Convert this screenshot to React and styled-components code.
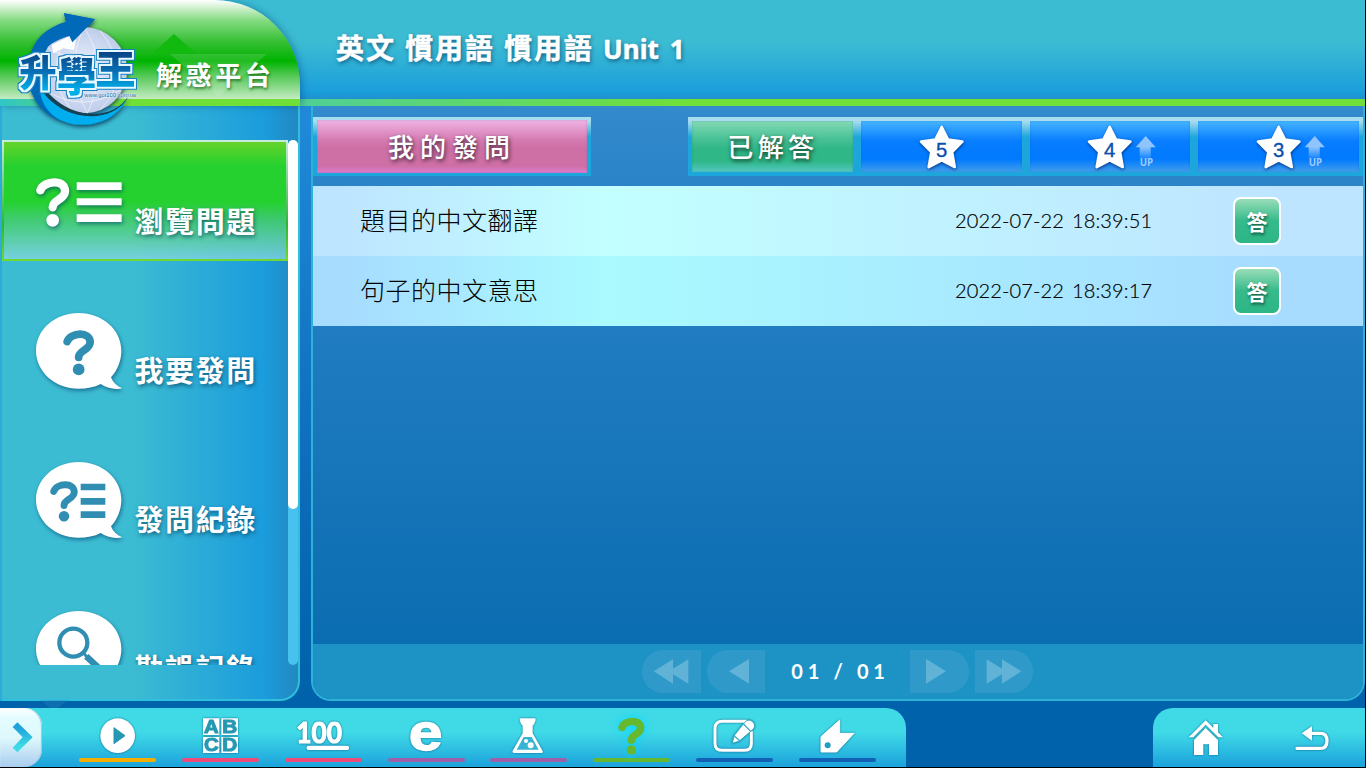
import React from "react";
import styled, { createGlobalStyle } from "styled-components";

const Global = createGlobalStyle`
  * { box-sizing: border-box; }
  body { margin: 0; background: #000; overflow: hidden;
    font-family: "Noto Sans CJK TC", "Noto Sans", sans-serif; }
  svg { display: block; flex: none; }
`;

const Screen = styled.div`
  width: 1366px; height: 768px; padding: 0 1px 1px 0; background: #000;
`;
const Page = styled.div`
  height: 767px; display: flex; flex-direction: column; position: relative;
  background: linear-gradient(180deg, #218ada 100px, #0b6cba 480px, #0062aa 700px);
`;
const Header = styled.header`
  height: 106px; flex: none; display: flex;
  background: linear-gradient(180deg, #3cbcd2 0, #3cbcd2 42px, #1b9edc 92px, #2090cf 99px, transparent 99px),
    linear-gradient(90deg, #4fcf97 300px, #70e038 690px);
`;
const Badge = styled.div`
  width: 300px; height: 106px; position: relative; z-index: 2;
  border-radius: 0 85px 0 0;
  background: linear-gradient(180deg, #fff 0, #86dc83 20px, #35bf34 42px, #00b300 61px, #55c957 76px, #c4ebc2 99px, transparent 99px),
    linear-gradient(90deg, #2fc6c7 0, #70e038 120px);
  box-shadow: 2px 0 7px rgba(0, 60, 120, 0.4);
`;
const BadgeArt = styled.svg`
  position: absolute; left: 0; top: 0; overflow: visible;
`;
const BadgeName = styled.div`
  padding: 55px 0 0 156px; font-size: 26px; line-height: 38px; font-weight: 700;
  letter-spacing: 3.6px; color: #fff; white-space: nowrap; position: relative;
  text-shadow: 1px 2px 3px rgba(0, 60, 0, 0.6);
`;
const Title = styled.h1`
  margin: 0; padding: 27px 0 0 36px; font-size: 28px; line-height: 40px; font-weight: 700;
  letter-spacing: 1.9px; word-spacing: 1px; color: #fff; white-space: nowrap;
  -webkit-text-stroke: 0.5px #fff;
  text-shadow: 1px 2px 4px rgba(0, 50, 90, 0.7);
`;
const Latin = styled.span`
  font-family: "Noto Sans", sans-serif; font-size: 26px; letter-spacing: 0.1px; word-spacing: 4px;
`;
const Body = styled.div`
  height: 595px; flex: none; display: flex; gap: 11px;
`;
const Sidebar = styled.aside`
  width: 300px; border: 2px solid #2fbfdc; border-top: 0; border-left-color: #2cadd8;
  border-radius: 0 0 20px 0; padding-top: 34px; display: flex; align-items: flex-start;
  background: linear-gradient(90deg, #3cbcd2 130px, #1b9cdc 262px, #2289c2 294px);
`;
const Menu = styled.nav`
  width: 286px; height: 525px; overflow: hidden; display: flex; flex-direction: column; gap: 28px;
`;
const MenuItem = styled.div`
  height: 121px; flex: none; display: flex; padding-left: 32px; position: relative;
  &::before { content: ""; position: absolute; inset: 0; border: 2px solid;
    border-image: linear-gradient(#c7ebdd, #2db43a 70%, #70d82e) 1;
    background: linear-gradient(180deg, #66d32c 0, #25d12f 24px, #25d12f 60px, rgba(66,205,105,.9) 78px, rgba(140,215,235,.75) 119px);
    display: ${(p) => (p.$active ? "block" : "none")}; }
`;
const MenuIcon = styled.svg`
  position: relative; filter: drop-shadow(1px 2px 2px rgba(0, 60, 110, 0.6));
`;
const MenuLabel = styled.span`
  position: relative; margin: 60px 0 0 9.5px; line-height: 40px; font-size: 29px; font-weight: 700;
  letter-spacing: 1.6px; color: #fff; white-space: nowrap;
  text-shadow: 1px 2px 4px rgba(0, 60, 90, 0.7);
`;
const Track = styled.div`
  width: 10px; height: 525px; border-radius: 5px; background: #48c1ef;
`;
const Thumb = styled.div`
  height: 369px; border-radius: 5px; background: #fff;
`;
const Main = styled.main`
  width: 1054px; border: 2px solid #2cb2d6; border-top: 0; border-radius: 0 0 20px 20px;
  display: flex; flex-direction: column; overflow: hidden;
  background: linear-gradient(180deg, #338bcd 0, #2b83c8 80px, #217cc1 220px, #0b6db1 538px);
`;
const Tabs = styled.div`
  display: flex; justify-content: space-between; padding-top: 11px; height: 80px; flex: none;
`;
const TabGroup = styled.div`
  display: flex; height: 59px; width: 675px;
`;
const tones = {
  pink: "linear-gradient(180deg, #efb4e2 0, #d57ab2 20px, #ce6fa6 28px, #ce6fa6 46px, #de7cce 53px)",
  green: "linear-gradient(180deg, #84d9b4 0, #48c196 18px, #2fb787 28px, #2fb787 40px, #53c8c3 51px)",
  blue: "linear-gradient(180deg, #45b4ff 0, #087dff 20px, #007aff 38px, #429eea 51px)",
};
const Tab = styled.div`
  width: ${(p) => p.$w}; height: 59px; padding: ${(p) => (p.$tone === "pink" ? "3px 4px" : "4px")};
  background: linear-gradient(180deg, #a9dcef 4px, #1ca6dc 20px);
`;
const TabFace = styled.div`
  height: 100%; display: flex; align-items: center; justify-content: center; color: #fff;
  font-size: 26px; font-weight: 500; letter-spacing: ${(p) => (p.$tone === "pink" ? 6 : 4.4)}px; white-space: nowrap;
  padding-left: ${(p) => (p.$tone === "pink" ? 0 : 1)}px; padding-bottom: 3px;
  text-shadow: 1px 2px 4px rgba(0, 0, 0, 0.7);
  background: ${(p) => tones[p.$tone]};
  box-shadow: inset 0 0 2px rgba(0, 80, 180, 0.3);
`;
const StarArt = styled.svg`
  margin: -2px -4px -4px ${(p) => (p.$shift ? -6 : -4)}px; overflow: visible; text-shadow: none; letter-spacing: 0;
`;
const Row = styled.div`
  height: 70px; flex: none; display: flex; align-items: center; color: #000; padding-bottom: 2px;
  background: ${(p) => p.$alt
    ? "linear-gradient(90deg, #a7dcff 3%, #aafaff 28%, #a7dcff 92%)"
    : "linear-gradient(90deg, #bee5ff 3%, #c2ffff 28%, #bee5ff 92%)"};
`;
const Question = styled.div`
  width: 595px; margin-left: 47px; padding-bottom: 2px; font-size: 25px; font-weight: 300; letter-spacing: 0.5px;
`;
const Stamp = styled.div`
  width: 278px; padding-bottom: 1px; font-family: Lato, sans-serif; font-size: 20px; font-weight: 300;
  letter-spacing: 0.13px; word-spacing: 2.5px; -webkit-text-stroke: 0.2px #000;
`;
const Answer = styled.button`
  width: 48px; height: 48px; padding: 0; border: 2px solid #fff; border-radius: 8px; color: #fff;
  font: 700 21px/40px "Noto Sans CJK TC", sans-serif; margin-top: 1px;
  background: linear-gradient(180deg, #98ddb8 0, #35ba8b 22px, #2db686 100%);
  text-shadow: 1px 2px 3px rgba(0, 50, 30, 0.7);
`;
const Pager = styled.div`
  margin-top: auto; height: 55px; flex: none; display: flex; align-items: center; justify-content: center;
  gap: 6px; background: #1c93c4; padding-right: 1px;
`;
const PageButton = styled.div`
  width: 58.5px; height: 43px; background: #2f9aca; display: flex; align-items: center; justify-content: center;
  border-radius: ${(p) => (p.$back ? "21px 0 0 21px" : "0 21px 21px 0")};
`;
const PageText = styled.div`
  width: 133px; text-align: center; color: #fff; font: 700 20px Lato, sans-serif;
  letter-spacing: 4.7px; padding: 0 0 1px 6px; white-space: nowrap;
`;
const Dock = styled.footer`
  margin-top: 7px; height: 59px; display: flex; justify-content: space-between;
`;
const DockPart = styled.div`
  display: flex; width: ${(p) => p.$w}px;
  border-radius: ${(p) => (p.$right ? "20px 0 0 0" : "0 20px 0 0")};
  background: linear-gradient(180deg, #40dae7 24px, #1da5dc 57px);
`;
const Opener = styled.div`
  width: 42px; height: 59px; margin-right: 24px; border-radius: 0 18px 18px 0;
  background: linear-gradient(180deg, #fff, #e2fcff 10px, #def8fc 30px, #a9cdef 59px);
  box-shadow: inset -1px 0 1px #9cc6dc, inset 0 1px 1px #fff;
`;
const DockItem = styled.div`
  width: ${(p) => (p.$color ? 102.86 : 106)}px; display: flex; flex-direction: column; align-items: center;
  &::after { content: ""; width: 77px; height: 4px; border-radius: 2px; background: ${(p) => p.$color || "transparent"}; }
`;
const DockIcon = styled.svg`
  overflow: visible;
  filter: ${(p) => (p.$glow
    ? "drop-shadow(0 0 5px #00d8ff)"
    : "drop-shadow(0 0.7px 1px rgba(0, 70, 110, 0.75))")};
`;
const Decor = styled.svg`
  position: absolute; left: 40px; top: 700px;
`;

const Logo = () => (
  <BadgeArt width="300" height="140" viewBox="0 0 900 420">
    <defs>
      <linearGradient id="ink" gradientUnits="userSpaceOnUse" x1="0" y1="145" x2="0" y2="285">
        <stop offset="0" stopColor="#083c7c" /><stop offset=".5" stopColor="#086fb4" /><stop offset=".9" stopColor="#00aeea" />
      </linearGradient>
      <radialGradient id="globe"><stop offset="0" stopColor="#eef3ff" /><stop offset="1" stopColor="#bfcdea" /></radialGradient>
      <filter id="soft" x="-20%" y="-20%" width="140%" height="140%">
        <feDropShadow dx="2" dy="6" stdDeviation="6" floodColor="#024" floodOpacity=".75" />
      </filter>
      <filter id="outline" x="-20%" y="-20%" width="140%" height="140%" colorInterpolationFilters="sRGB">
        <feMorphology in="SourceGraphic" operator="dilate" radius="1.2" result="body" />
        <feMorphology in="SourceAlpha" operator="dilate" radius="5" result="mid" />
        <feMorphology in="SourceAlpha" operator="dilate" radius="9" result="wide" />
        <feFlood floodColor="#e9f7ff" /><feComposite in2="mid" operator="in" result="white" />
        <feFlood floodColor="#1681c2" /><feComposite in2="wide" operator="in" result="blue" />
        <feMerge><feMergeNode in="blue" /><feMergeNode in="white" /><feMergeNode in="body" /></feMerge>
      </filter>
    </defs>
    <path d="M455 162L522 102L590 162Z" fill="#12b90f" />
    <path d="M510 162H800L655 290Z" fill="#fff" opacity=".13" />
    <g filter="url(#soft)">
      <path d="M192 40L285 58L217 127L210 108C150 120 112 175 117 235C124 300 165 340 215 368C140 362 84 300 84 220C84 135 132 85 198 66Z" fill="#0069b8" />
      <circle cx="252" cy="211" r="129" fill="url(#globe)" />
      <g fill="none" stroke="#fff" strokeWidth="2" opacity=".8">
        <path d="M126 190Q250 270 376 190M145 145Q250 205 360 145M142 274Q250 340 362 270M252 82Q190 210 262 340M252 82Q330 200 262 340M215 88Q120 220 220 336M300 92Q405 220 300 330" />
      </g>
      <path d="M155 135L210 108L217 127L228 118L222 150L190 145L160 160Z" fill="#fff" />
      <path d="M122 262C126 400 330 412 384 290C340 362 200 368 122 250Z" fill="#123f52" />
      <path d="M120 272C134 400 328 408 380 297C338 368 195 372 124 270Z" fill="#00aeef" />
      <path d="M192 40L285 58L217 127L208 108C168 120 140 136 122 165L88 182C98 115 142 83 198 66Z" fill="#0069b8" />
    </g>
    <g fontFamily="Noto Sans CJK TC" fontWeight="900" textAnchor="middle" fill="url(#ink)" filter="url(#outline)">
      <text x="114" y="260" fontSize="112">升</text>
      <text x="230" y="274" fontSize="119">學</text>
      <text x="346" y="251" fontSize="121">王</text>
    </g>
    <text x="253" y="290" fontFamily="Liberation Sans" fontSize="18" textLength="155" fill="#1b5f94" stroke="#e8f4ff" strokeWidth="2" paintOrder="stroke">www.got100.com.tw</text>
  </BadgeArt>
);

const Hook = ({ x, y, s = 1, color = "#fff", w = 25 }) => (
  <g transform={`translate(${x} ${y}) scale(${s})`}>
    <path d="M-37 -37C-27 -67 38 -72 37 -34C36 -8 0 -10 0 14" fill="none" stroke={color} strokeWidth={w} strokeLinecap="round" strokeLinejoin="round" />
    <circle cx="0" cy="53" r="19" fill={color} />
  </g>
);
const Bubble = () => (
  <path d="M235 71C306 71 363 121 363 184C363 216 350 244 332 264C338 280 350 291 366 297C340 302 318 295 301 284C282 294 260 298 235 298C164 298 107 247 107 184C107 121 164 71 235 71Z" fill="#fff" />
);
const hole = "#318eb3";
const menu = [
  ["瀏覽問題", <g key="a"><Hook x={157} y={187} /><path d="M229 126H364V149H229ZM229 174H364V195H229ZM229 222H364V245H229Z" fill="#fff" /></g>],
  ["我要發問", <g key="b"><Bubble /><Hook x={235} y={191} s={0.93} color={hole} /></g>],
  ["發問紀錄", <g key="c"><Bubble /><Hook x={191} y={190} s={0.83} color={hole} /><path d="M241 136H315V156H241ZM241 179H315V199H241ZM241 219H315V239H241Z" fill={hole} /></g>],
  ["勘誤記錄", <g key="d"><Bubble /><g fill="none" stroke={hole}><circle cx="219" cy="166" r="42" strokeWidth="13" /><path d="M250 198L262 211" strokeWidth="9" /><path d="M258 207L306 252" strokeWidth="19" /></g></g>],
];

const ink = "#2798b2";
const dock = [
  ["#f5ad00", <g key="1"><circle cx="155" cy="83" r="52" fill="#fff" /><path d="M144 59L177 83L144 107Z" fill={ink} stroke={ink} strokeWidth="3" /></g>],
  ["#ef4b78", <g key="2"><path d="M102 31H151V81H102ZM157 31H207V81H157ZM102 87H151V135H102ZM157 87H207V135H157Z" fill="#fff" />
    <g fill={ink} stroke={ink} strokeWidth="3" fontFamily="Liberation Sans" fontSize="56" fontWeight="700" textAnchor="middle">
      <text x="127" y="76" textLength="44" lengthAdjust="spacingAndGlyphs">A</text><text x="182" y="76" textLength="45" lengthAdjust="spacingAndGlyphs">B</text><text x="127" y="130" textLength="44" lengthAdjust="spacingAndGlyphs">C</text><text x="182" y="130" textLength="45" lengthAdjust="spacingAndGlyphs">D</text></g></g>],
  ["#ef4b78", <g key="3"><text x="73" y="104" textLength="137" lengthAdjust="spacingAndGlyphs" fontFamily="Lato" fontSize="84" fontWeight="700" fill="#fff" stroke="#fff" strokeWidth="3.5" strokeLinejoin="round">100</text><rect x="104" y="113" width="127" height="13" rx="5" fill="#fff" /></g>],
  ["#a15fa7", <text key="4" x="152" y="127" textAnchor="middle" textLength="101" lengthAdjust="spacingAndGlyphs" fontFamily="Liberation Sans" fontSize="156" fontWeight="700" fill="#fff" stroke="#fff" strokeWidth="4" strokeLinejoin="round">e</text>],
  ["#a15fa7", <g key="5"><path d="M132 31H172Q177 31 176 37L171 49L167 53V76L197 129Q199 135 193 135H111Q104 135 107 128L137 76V53L132 47L128 37Q127 31 132 31Z" fill="#fff" /><path d="M140 87H164L185 125H119Z" fill="#37b4d4" /><circle cx="147" cy="99" r="6" fill="#fff" /><circle cx="161" cy="112" r="9" fill="#fff" /></g>],
  ["#66b92e", <Hook key="6" x={154} y={86} s={0.75} w={30} color="#66b92e" />, true],
  ["#1261b5", <g key="7" transform="translate(2 0)"><path d="M190 40H117Q94 40 94 61V107Q94 127 117 127H181Q203 127 203 107V70" fill="none" stroke="#fff" strokeWidth="9" /><path d="M183 43Q195 30 208 42Q218 54 207 65L167 99L146 106L151 83Z" fill="#fff" stroke="#36acc7" strokeWidth="3" /><path d="M179 47L201 70M151 83L169 99" stroke="#36acc7" strokeWidth="4" /></g>],
  ["#1261b5", <g key="8" transform="translate(3 0)"><path d="M158 36V76H201L149 132H102V86Z" fill="#fff" stroke="#fff" strokeWidth="3" strokeLinejoin="round" /><circle cx="122" cy="112" r="9" fill="#269dc0" /></g>],
];

const Star = ({ n, up }) => (
  <StarArt $shift={up} width="168.75" height="59" viewBox="0 0 506 177">
    <defs><linearGradient id="fade" x1="0" y1="0" x2="0" y2="1"><stop offset=".45" stopColor="#8fc4ff" /><stop offset="1" stopColor="#8fc4ff" stopOpacity="0" /></linearGradient></defs>
    <path d="M254 30L273 68L316 74L285 105L293 150L254 130L215 150L223 105L192 74L235 68Z" fill="#fff" stroke="#fff" strokeWidth="8" strokeLinejoin="round" filter="drop-shadow(1px 4px 4px rgba(0,30,90,.7))" />
    <text x="254" y="119" textAnchor="middle" fontFamily="Liberation Sans" fontSize="61" fontWeight="400" fill="#0b4fae" stroke="#0b4fae" strokeWidth="1">{n}</text>
    {up && <g><path d="M362 57L392 91H377V130H344V91H332Z" fill="url(#fade)" /><text x="364" y="146" textAnchor="middle" fontFamily="Noto Sans" fontWeight="700" fontSize="29" fill="#9fcbff">UP</text></g>}
  </StarArt>
);

const Arrow = ({ back, twice }) => (
  <svg width="58" height="43" viewBox="0 0 174 129" fill="#60b2d6">
    <g transform={back ? "translate(174 0) scale(-1 1)" : undefined}>
      {twice ? <path d="M35 28L81 56V28L139 64L81 101V73L35 101Z" /> : <path d="M48 27L108 64L48 101Z" />}
    </g>
  </svg>
);

export default function App() {
  return (
    <Screen>
      <Global />
      <Page>
        <Decor width="28" height="8"><path d="M0 0H28L18 8H10Z" fill="#2b86c4" opacity=".35" /></Decor>
        <Header>
          <Badge><Logo /><BadgeName>解惑平台</BadgeName></Badge>
          <Title>英文 慣用語 慣用語 <Latin>Unit 1</Latin></Title>
        </Header>
        <Body>
          <Sidebar>
            <Menu>
              {menu.map(([label, art], i) => (
                <MenuItem key={label} $active={i === 0}>
                  <MenuIcon width="91" height="121" viewBox="101 -1 273 363">{art}</MenuIcon>
                  <MenuLabel>{label}</MenuLabel>
                </MenuItem>
              ))}
            </Menu>
            <Track><Thumb /></Track>
          </Sidebar>
          <Main>
            <Tabs>
              <Tab $w="278px" $tone="pink"><TabFace $tone="pink">我的發問</TabFace></Tab>
              <TabGroup>
                <Tab $w="25%" $tone="green"><TabFace $tone="green">已解答</TabFace></Tab>
                {[5, 4, 3].map((n) => (
                  <Tab key={n} $w="25%" $tone="blue"><TabFace $tone="blue"><Star n={n} up={n < 5} /></TabFace></Tab>
                ))}
              </TabGroup>
            </Tabs>
            <Row><Question>題目的中文翻譯</Question><Stamp>2022-07-22 18:39:51</Stamp><Answer>答</Answer></Row>
            <Row $alt><Question>句子的中文意思</Question><Stamp>2022-07-22 18:39:17</Stamp><Answer>答</Answer></Row>
            <Pager>
              <PageButton $back><Arrow back twice /></PageButton>
              <PageButton $back><Arrow back /></PageButton>
              <PageText>01 / 01</PageText>
              <PageButton><Arrow /></PageButton>
              <PageButton><Arrow twice /></PageButton>
            </Pager>
          </Main>
        </Body>
        <Dock>
          <DockPart $w={906}>
            <Opener>
              <svg width="42" height="59" viewBox="0 0 126 177">
                <defs><linearGradient id="chev" x1="0" y1="0" x2="0" y2="1"><stop offset=".2" stopColor="#1ea4dc" /><stop offset=".8" stopColor="#3edbe6" /></linearGradient></defs>
                <path d="M52 43L98 88L52 133L38 119L68 88L38 57Z" fill="url(#chev)" />
              </svg>
            </Opener>
            {dock.map(([color, art, glow], i) => (
              <DockItem key={i} $color={color}><DockIcon $glow={glow} width="103" height="49.7" viewBox="0 0 309 149">{art}</DockIcon></DockItem>
            ))}
          </DockPart>
          <DockPart $w={212} $right>
            <DockItem>
              <DockIcon width="106" height="50" viewBox="0 0 318 150">
                <path d="M107 88L158 37L181 59V48H195V73L210 88H196L158 50L121 88Z" fill="#fff" />
                <path d="M158 60L195 96V141H168V109H151V141H123V96Z" fill="#fff" />
              </DockIcon>
            </DockItem>
            <DockItem>
              <DockIcon width="106" height="50" viewBox="0 0 318 150">
                <path d="M150 76H184Q204 76 204 98Q204 121 184 121H114" fill="none" stroke="#fff" strokeWidth="10" strokeLinecap="round" />
                <path d="M128 76L159 54V98Z" fill="#fff" />
              </DockIcon>
            </DockItem>
          </DockPart>
        </Dock>
      </Page>
    </Screen>
  );
}
